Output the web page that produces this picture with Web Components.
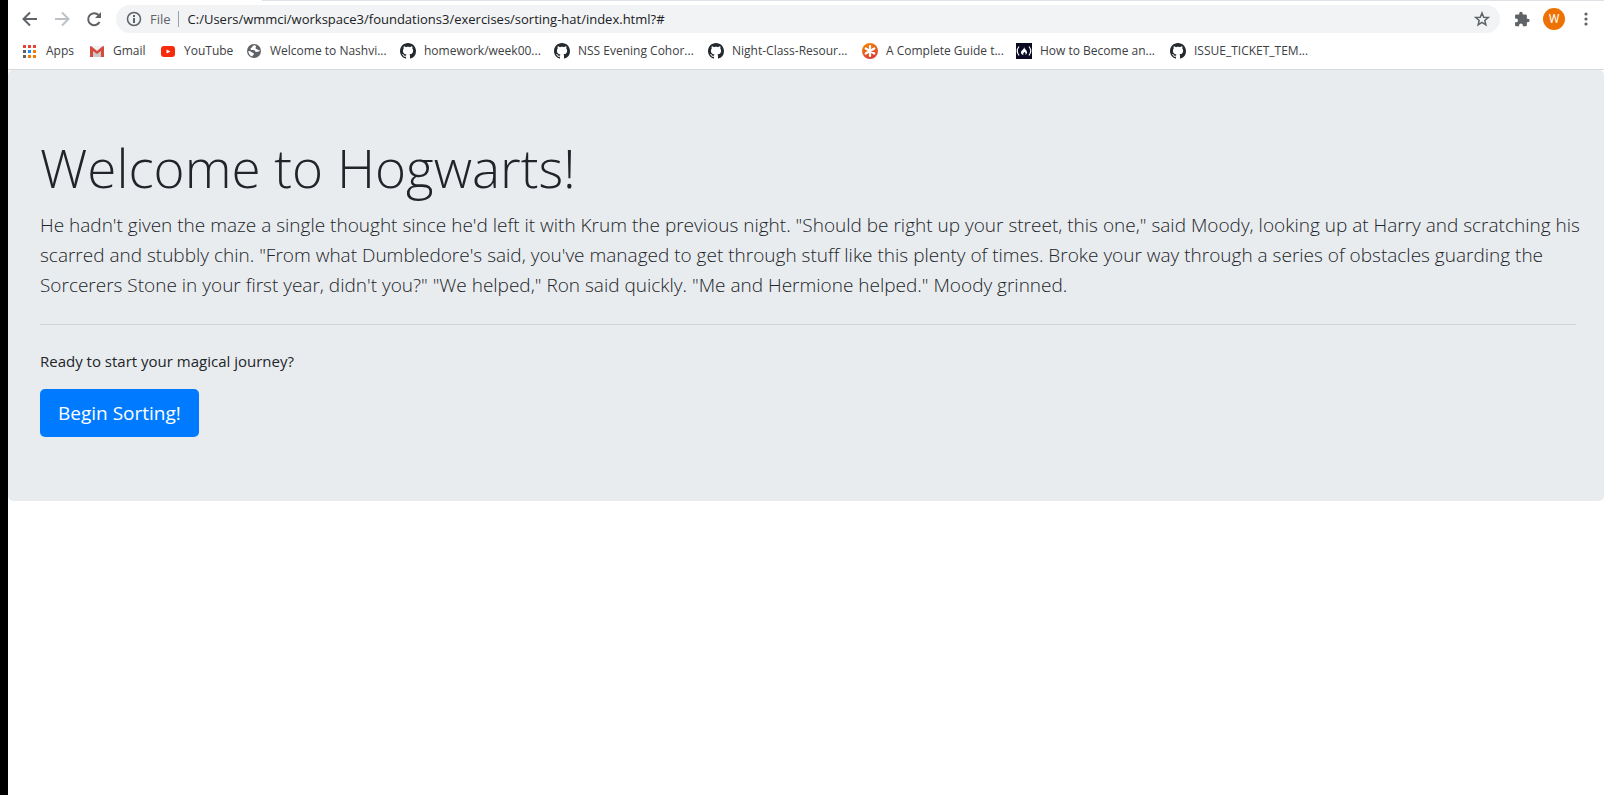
<!DOCTYPE html>
<html lang="en">
<head>
<meta charset="utf-8">
<title>Sorting Hat</title>
<style>
html, body { margin: 0; background: #fff; }
body { font-family: "Open Sans", "Noto Sans", sans-serif; color: #212529; }
</style>
</head>
<body>
<browser-window>
  <browser-toolbar slot="chrome" address="C:/Users/wmmci/workspace3/foundations3/exercises/sorting-hat/index.html?#"></browser-toolbar>
  <bookmarks-bar slot="chrome">
    <book-mark icon="apps">Apps</book-mark>
    <book-mark icon="gmail">Gmail</book-mark>
    <book-mark icon="youtube">YouTube</book-mark>
    <book-mark icon="globe">Welcome to Nashvi...</book-mark>
    <book-mark icon="github">homework/week00...</book-mark>
    <book-mark icon="github">NSS Evening Cohor...</book-mark>
    <book-mark icon="github">Night-Class-Resour...</book-mark>
    <book-mark icon="asterisk">A Complete Guide t...</book-mark>
    <book-mark icon="camp">How to Become an...</book-mark>
    <book-mark icon="github">ISSUE_TICKET_TEM...</book-mark>
  </bookmarks-bar>
  <welcome-banner>
    <span slot="title">Welcome to Hogwarts!</span>
    <span slot="lead">He hadn't given the maze a single thought since he'd left it with Krum the previous night. "Should be right up your street, this one," said Moody, looking up at Harry and scratching his scarred and stubbly chin. "From what Dumbledore's said, you've managed to get through stuff like this plenty of times. Broke your way through a series of obstacles guarding the Sorcerers Stone in your first year, didn't you?" "We helped," Ron said quickly. "Me and Hermione helped." Moody grinned.</span>
    <span slot="prompt">Ready to start your magical journey?</span>
    <span slot="action">Begin Sorting!</span>
  </welcome-banner>
</browser-window>
<script>
const ICONS = {
  apps: `<g><path fill="#ea4335" d="M1 2h3v3H1zM6 2h3v3H6zM11 2h3v3h-3z"/><path fill="#5f6368" d="M1 7h3v3H1z"/><path fill="#1a8cff" d="M6 7h3v3H6z"/><path fill="#f57c00" d="M11 7h3v3h-3zM6 12h3v3H6zM11 12h3v3h-3z"/><path fill="#5f6368" d="M1 12h3v3H1z"/></g>`,
  gmail: `<path fill="#e8e8e8" d="M1 3h14v11H1z"/><path fill="#c9c9c9" d="M4 14V8l4 3 4-3v6z"/><path fill="#d54b3d" d="M1 14V4q0-1 1-1l6 5 6-5q1 0 1 1v10h-3V8l-4 3-4-3v6z"/><path fill="#f2f2f2" d="M3 3h10L8 7z"/>`,
  youtube: `<rect x="1" y="3" width="14" height="11" rx="3" fill="#f62b0c"/><path fill="#fff" d="M6.500 6.500v4l4-2z"/>`,
  globe: `<circle cx="8" cy="8" r="7" fill="#5f6368"/><path fill="#fff" d="M8 2.300c-2 .8-1.500 2.200-3 2.700-1 .4-.3 2 .5 2 2 .1 3.400-.2 3.700 1.300.3 1.600 2.200.3 3.500.2 1 0 1-.8.9-1.400-1.100.5-1.700-.7-2.700-.8C9.600 6.200 9 4.600 10 3.900c.5-.4-.5-1.500-2-1.600zM2.300 8c.1 2.500 1.500 4.700 4 5.500-.2-1 1.700-1.400 1.600-2.500-.1-1.500-1.800-1-2.600-2C4.700 8.200 3.500 8 2.300 8z"/>`,
  github: `<path fill="#24292e" fill-rule="evenodd" d="M8 0C3.580 0 0 3.580 0 8c0 3.540 2.290 6.530 5.470 7.590.4.070.55-.17.55-.38 0-.19-.01-.82-.01-1.490-2.010.37-2.530-.49-2.690-.94-.09-.23-.48-.94-.82-1.130-.28-.15-.68-.52-.01-.53.63-.01 1.080.58 1.230.82.72 1.210 1.870.87 2.330.66.070-.52.28-.87.51-1.070-1.780-.2-3.640-.89-3.640-3.950 0-.87.31-1.590.82-2.150-.08-.2-.36-1.020.08-2.120 0 0 .67-.21 2.200.82.64-.18 1.320-.27 2-.27s1.360.09 2 .27c1.530-1.040 2.200-.82 2.200-.82.44 1.100.16 1.920.08 2.120.51.56.82 1.270.82 2.150 0 3.070-1.870 3.750-3.650 3.950.29.25.54.73.54 1.480 0 1.070-.01 1.930-.01 2.200 0 .21.15.46.55.38A8.010 8.010 0 0 0 16 8c0-4.420-3.580-8-8-8z"/>`,
  asterisk: `<defs><linearGradient id="g" x1="0" y1="0" x2=".4" y2="1"><stop stop-color="#f58a00"/><stop offset="1" stop-color="#dd4135"/></linearGradient></defs><circle cx="8" cy="8" r="8" fill="url(#g)"/><path stroke="#fff" stroke-width="2.200" stroke-linecap="round" d="M8 3v10M3.700 5.500l8.600 5M12.300 5.500l-8.600 5"/>`,
  camp: `<path fill="#0a0a23" d="M0 0h16v16H0z"/><path fill="none" stroke="#fff" stroke-width="1.200" d="M3 3.500q-3.500 4.500 0 9M13 3.500q3.500 4.500 0 9"/><path fill="#fff" d="M8 4c.2 2 3 3 3 5.300 0 1.300-.6 2.300-1.600 2.700.6-1.200.2-2-.9-3.200-.2 1.200-2.200 1.400-1 3.200C6 12 5 10.800 5 9.300 5 7.500 8.300 6.500 8 4z"/>`
};

class BrowserWindow extends HTMLElement {
  constructor() {
    super();
    this.attachShadow({ mode: "open" }).innerHTML = `
      <style>
        :host { display: block; min-height: 100vh; box-sizing: border-box; border-left: 8px solid #000; background: #fff; }
        main { background: #fff; }
      </style>
      <header><slot name="chrome"></slot></header>
      <main><slot></slot></main>`;
  }
}

class BrowserToolbar extends HTMLElement {
  constructor() {
    super();
    this.attachShadow({ mode: "open" }).innerHTML = `
      <style>
        :host { display: flex; align-items: center; height: 38px; box-sizing: border-box; padding: 0 2px 0 14px; background: linear-gradient(#dee1e6, #dee1e6) 254px 0 / 100% 1px no-repeat #fff; }
        button { display: grid; place-items: center; padding: 0; border: 0; background: none; width: 32px; height: 28px; color: #5f6368; }
        button:first-of-type { width: 16px; margin-right: 8px; }
        svg { display: block; }
        nav { display: flex; }
        nav button:nth-of-type(2) { color: #bdc1c6; }
        .pill { flex: 1; display: flex; align-items: center; height: 28px; margin: 0 14px 0 6px; padding: 0 3px 0 10px; border-radius: 14px; background: #f1f3f4; font-size: 13px; }
        .pill label { padding: 0 7px 0 8px; margin-right: 9px; color: #5f6368; line-height: 16px; border-right: 1px solid #9aa0a6; }
        input { flex: 1; min-width: 0; padding: 0; border: 0; outline: 0; background: none; font: inherit; color: #202124; }
        .pill button:first-of-type { margin: 0; }
        .pill button:last-of-type { width: 30px; }
        button.avatar { width: 22px; height: 22px; margin: 0 5px; border-radius: 50%; background: #ee7203; color: #fff; font: 12px Roboto, sans-serif; }
      </style>
      <nav aria-label="Navigation">
        <button aria-label="Back"><svg width="16" height="16" viewBox="0 0 16 16" fill="none" stroke="currentColor" stroke-width="2"><path d="M15 8H2M8 1.500L1.500 8 8 14.500"/></svg></button>
        <button aria-label="Forward"><svg width="16" height="16" viewBox="0 0 16 16" fill="none" stroke="currentColor" stroke-width="2"><path d="M1 8h13M8 1.500L14.500 8 8 14.500"/></svg></button>
        <button aria-label="Reload"><svg width="16" height="16" viewBox="0 0 16 16"><path fill="none" stroke="currentColor" stroke-width="2" d="M13.500 11A6 6 0 1 1 12.500 4"/><path fill="currentColor" d="M15 1v6H9z"/></svg></button>
      </nav>
      <div class="pill">
        <button aria-label="Site information"><svg width="16" height="16" viewBox="0 0 16 16"><circle cx="8" cy="8" r="6.500" fill="none" stroke="currentColor" stroke-width="1.500"/><path fill="currentColor" d="M7 4h2v2H7zM7 7h2v5H7z"/></svg></button>
        <label for="address">File</label>
        <input id="address" type="text" spellcheck="false">
        <button aria-label="Bookmark this page"><svg width="16" height="16" viewBox="0 0 16 16" fill="none" stroke="currentColor" stroke-width="1.500"><path d="M8 2l1.700 4.200 4.500.3-3.400 2.900 1.100 4.400L8 11.400l-3.900 2.400 1.100-4.400L1.800 6.500l4.500-.3z"/></svg></button>
      </div>
      <button aria-label="Extensions"><svg width="16" height="16" viewBox="1 0 22 23" fill="currentColor"><path d="M20.500 11H19V7c0-1.100-.9-2-2-2h-4V3.500a2.500 2.500 0 0 0-5 0V5H4c-1.100 0-2 .9-2 2v3.800h1.500a2.700 2.700 0 0 1 0 5.400H2V20c0 1.100.9 2 2 2h3.800v-1.500a2.700 2.700 0 0 1 5.400 0V22H17c1.100 0 2-.9 2-2v-4h1.500a2.500 2.500 0 0 0 0-5z"/></svg></button>
      <button class="avatar" aria-label="Profile">W</button>
      <button aria-label="Menu"><svg width="4" height="14" viewBox="0 0 4 14" fill="currentColor"><circle cx="2" cy="2" r="1.600"/><circle cx="2" cy="7" r="1.600"/><circle cx="2" cy="12" r="1.600"/></svg></button>`;
    this.shadowRoot.querySelector("input").value = this.getAttribute("address");
  }
}

class BookmarksBar extends HTMLElement {
  constructor() {
    super();
    this.attachShadow({ mode: "open" }).innerHTML = `
      <style>
        :host { display: grid; grid-template-columns: 67px 71px 86px repeat(7, 154px); align-items: center; padding: 0 0 5px 14px; height: 26px; border-bottom: 1px solid #d5d8dc; overflow: hidden; }
      </style>
      <slot></slot>`;
  }
}

class BookMark extends HTMLElement {
  constructor() {
    super();
    this.attachShadow({ mode: "open" }).innerHTML = `
      <style>
        :host { display: block; }
        a { display: flex; align-items: center; gap: 8px; color: #3c4043; font-size: 12px; line-height: 16px; text-decoration: none; white-space: nowrap; }
        svg { flex: none; display: block; }
      </style>
      <a href="#"><svg width="16" height="16" viewBox="0 0 16 16" aria-hidden="true">${ICONS[this.getAttribute("icon")]}</svg><slot></slot></a>`;
  }
}

class WelcomeBanner extends HTMLElement {
  constructor() {
    super();
    this.attachShadow({ mode: "open" }).innerHTML = `
      <style>
        :host { display: block; padding: 64px 28px 64px 32px; border-radius: 5px; background: #e9ecef; }
        h1 { margin: 0 0 8px; font-size: 53px; line-height: 68px; font-weight: 300; }
        p { margin: 0 0 16px; font-size: 15px; line-height: 24px; }
        /* The lead may run a little into the right padding before it wraps. */
        p.lead { margin: 0 -14px 15px 0; font-size: 19px; line-height: 30px; font-weight: 300; }
        hr { margin: 24px 0; border: 0; border-top: 1px solid #cfd3d6; }
        button { display: block; height: 48px; padding: 0 18px; border: 0; border-radius: 5px; background: #007bff; color: #fff; font: inherit; font-size: 19px; }
      </style>
      <h1><slot name="title"></slot></h1>
      <p class="lead"><slot name="lead"></slot></p>
      <hr>
      <p><slot name="prompt"></slot></p>
      <button type="button"><slot name="action"></slot></button>`;
  }
}

customElements.define("browser-window", BrowserWindow);
customElements.define("browser-toolbar", BrowserToolbar);
customElements.define("bookmarks-bar", BookmarksBar);
customElements.define("book-mark", BookMark);
customElements.define("welcome-banner", WelcomeBanner);
</script>
</body>
</html>
